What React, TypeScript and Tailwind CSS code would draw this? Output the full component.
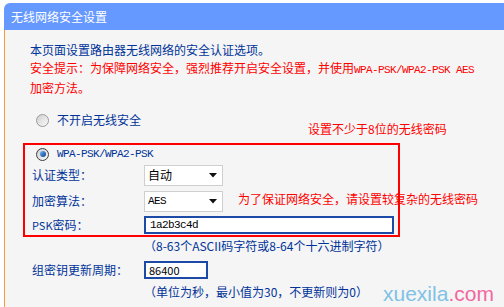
const cjk = { fontFamily: '"Noto Sans CJK SC", "Noto Sans", sans-serif' };
const mono = { fontFamily: '"Liberation Mono", "Noto Sans CJK SC", monospace', letterSpacing: "-0.6px" };

const Radio = ({ checked }: { checked?: boolean }) => (
  <div
    className={`w-[13px] h-[13px] rounded-full border flex items-center justify-center bg-gradient-to-br from-[#d0d0d0] to-[#fafafa] ${
      checked ? "border-[#3c3c3c]" : "border-[#9a9a9a]"
    }`}
  >
    {checked && <div className="w-[6px] h-[6px] rounded-full bg-gradient-to-br from-[#6fb6ff] to-[#0a3f86]" />}
  </div>
);

const Select = ({ value, isMono }: { value: string; isMono?: boolean }) => (
  <div className="w-[79px] h-[21px] border border-[#cfcfcf] bg-white flex items-center justify-between pl-[3px] pr-[5px] text-black">
    {isMono ? (
      <span className="text-[11px]" style={mono}>{value}</span>
    ) : (
      <span className="text-[12px]">{value}</span>
    )}
    <svg width="8" height="5" viewBox="0 0 8 5">
      <path d="M0 0h8L4 4.5z" fill="#111" />
    </svg>
  </div>
);

export default function App() {
  return (
    <div className="w-[504px] h-[307px] bg-white relative overflow-hidden text-[12px] leading-[18px] text-[#003399]" style={cjk}>
      <div className="pl-[4px] pt-[3px] h-full flex flex-col">
        <div className="h-[27px] bg-[#6699ff] rounded-tl-[6px] text-white pl-[7px] flex items-center text-[12px]">
          无线网络安全设置
        </div>
        <div className="flex-1 border-l border-[#ff9933] bg-[#f5f5f5] pl-[18px] pt-[11px]">
          <div className="pl-[7px] w-[457px]">
            <div>本页面设置路由器无线网络的安全认证选项。</div>
            <div className="text-[#ff0000]">
              安全提示：为保障网络安全，强烈推荐开启安全设置，并使用
              <span className="text-[11px]" style={mono}>WPA-PSK/WPA2-PSK AES</span>
              加密方法。
            </div>
          </div>

          <div className="mt-[14px] h-[18px] pl-[13px] flex items-center gap-[8px]">
            <Radio />
            <span>不开启无线安全</span>
          </div>

          <div className="mt-[14px] w-[377px] border-2 border-[#ff0000]">
            <div className="h-[18px] pl-[11px] flex items-center gap-[8px]">
              <Radio checked />
              <span className="text-[11px]" style={mono}>WPA-PSK/WPA2-PSK</span>
            </div>
            <div className="mt-[1px] h-[22px] pl-[7px] flex items-center">
              <span className="w-[112px]">认证类型：</span>
              <Select value="自动" />
            </div>
            <div className="mt-[4px] h-[22px] pl-[7px] flex items-center">
              <span className="w-[112px]">加密算法：</span>
              <Select value="AES" isMono />
            </div>
            <div className="mt-[2px] h-[21px] pl-[7px] flex items-center">
              <span className="w-[112px]">
                <span className="text-[11px]">PSK</span>密码：
              </span>
              <div className="w-[250px] h-[18px] border-2 border-[#1d4aa6] bg-white flex items-center pl-[4px] text-black">
                <span className="text-[11px]" style={mono}>1a2b3c4d</span>
              </div>
            </div>
          </div>

          <div className="pl-[121px]">（8-63个ASCII码字符或8-64个十六进制字符）</div>

          <div className="mt-[6px] h-[18px] pl-[9px] flex items-center">
            <span className="w-[112px]">组密钥更新周期：</span>
            <div className="w-[64px] h-[18px] border-2 border-[#1d4aa6] bg-white flex items-center pl-[3px] text-black text-[11px]">
              86400
            </div>
          </div>

          <div className="mt-[4px] pl-[121px]">（单位为秒，最小值为30，不更新则为0）</div>
        </div>
      </div>

      <div className="absolute left-[308px] top-[120px] text-[#ff0000]">设置不少于8位的无线密码</div>
      <div className="absolute left-[238px] top-[190px] text-[#ff0000]">为了保证网络安全，请设置较复杂的无线密码</div>

      <div className="absolute left-[383px] top-[283px] text-[21px] leading-none" style={{ fontFamily: '"Liberation Sans", Arial, sans-serif' }}>
        <span className="text-[#7fc2e6]">xuexila</span>
        <span className="text-[#f3679f]">.com</span>
      </div>
    </div>
  );
}
